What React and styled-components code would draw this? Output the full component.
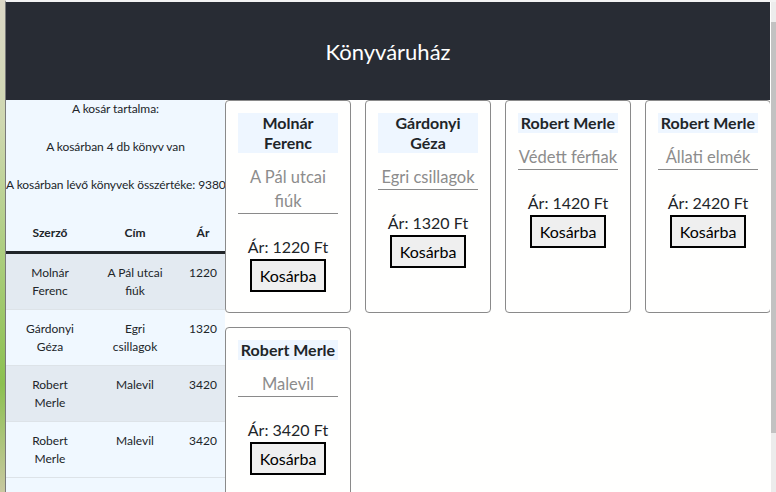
import React from "react";
import styled, { createGlobalStyle } from "styled-components";

const FONT = `"Lato", "Open Sans", sans-serif`;

const books = [
  { author: "Molnár Ferenc", title: "A Pál utcai fiúk", price: 1220 },
  { author: "Gárdonyi Géza", title: "Egri csillagok", price: 1320 },
  { author: "Robert Merle", title: "Védett férfiak", price: 1420 },
  { author: "Robert Merle", title: "Állati elmék", price: 2420 },
  { author: "Robert Merle", title: "Malevil", price: 3420 },
];

// a kosár tartalma
const cart = [books[0], books[1], books[4], books[4]];

function App() {
  const total = cart.reduce((sum, b) => sum + b.price, 0);

  return (
    <Desktop>
      <GlobalStyle />
      <DesktopEdge />
      <Window>
        <Page>
          <Header>Könyváruház</Header>
          <Main>
            <Sidebar>
              <Info>A kosár tartalma:</Info>
              <Info>A kosárban {cart.length} db könyv van</Info>
              <Info>A kosárban lévő könyvek összértéke: {total}</Info>
              <CartTable>
                <HeadRow>
                  <span>Szerző</span>
                  <span>Cím</span>
                  <span>Ár</span>
                </HeadRow>
                {cart.map((b, i) => (
                  <CartRow key={i} $striped={i % 2 === 0}>
                    <span>{b.author}</span>
                    <span>{b.title}</span>
                    <span>{b.price}</span>
                  </CartRow>
                ))}
              </CartTable>
            </Sidebar>
            <Shelf>
              {books.map((b, i) => (
                <Card key={i}>
                  <Author>{b.author}</Author>
                  <Title>{b.title}</Title>
                  <Price>Ár: {b.price} Ft</Price>
                  <BuyButton>Kosárba</BuyButton>
                </Card>
              ))}
            </Shelf>
          </Main>
        </Page>
        <ScrollTrack>
          <ScrollThumb />
        </ScrollTrack>
      </Window>
    </Desktop>
  );
}

const GlobalStyle = createGlobalStyle`
  html, body {
    margin: 0;
    padding: 0;
    overflow: hidden;
  }
  body {
    font-family: ${FONT};
    color: #212529;
  }
`;

const Desktop = styled.div`
  display: flex;
  height: 100vh;
  overflow: hidden;
`;

const DesktopEdge = styled.div`
  width: 5px;
  flex-shrink: 0;
  background: linear-gradient(
    to bottom,
    #dcd8c6 0%,
    #cfd8b0 25%,
    #a8cc78 55%,
    #8cc050 78%,
    #c8c8a0 100%
  );
`;

const Window = styled.div`
  flex: 1;
  display: flex;
  border-left: 1px solid #7a7a7a;
  border-top: 2px solid #f3f3f3;
  background: #fffffe;
  min-width: 0;
`;

const Page = styled.div`
  width: 765px;
  display: flex;
  flex-direction: column;
  overflow: hidden;
`;

const Header = styled.header`
  height: 98px;
  flex-shrink: 0;
  background: #282c34;
  color: #ffffff;
  font-size: 22px;
  display: flex;
  align-items: center;
  justify-content: center;
`;

const Main = styled.div`
  flex: 1;
  display: flex;
  align-items: stretch;
`;

const Sidebar = styled.aside`
  width: 219px;
  flex-shrink: 0;
  background: #f0f8ff;
  font-size: 12px;
  line-height: 18px;
  text-align: center;
`;

const Info = styled.p`
  margin: 0 0 20px;
  white-space: nowrap;
  letter-spacing: -0.08px;
`;

const CartTable = styled.div`
  margin-top: 21px;
`;

const RowGrid = styled.div`
  display: grid;
  grid-template-columns: 64px 58px 30px;
  column-gap: 24px;
  padding: 0 0 0 12px;
  justify-items: center;
  text-align: center;
`;

const HeadRow = styled(RowGrid)`
  font-weight: 700;
  padding-top: 9px;
  padding-bottom: 9px;
  border-bottom: 3px solid #212529;
`;

const CartRow = styled(RowGrid)`
  padding-top: 10px;
  padding-bottom: 9px;
  min-height: 36px;
  background: ${(p) => (p.$striped ? "#e3eaf1" : "transparent")};
  border-bottom: 1px solid #dde3e8;
`;

const Shelf = styled.div`
  display: grid;
  grid-template-columns: repeat(4, 126px);
  gap: 14px;
  align-content: start;
  width: 546px;
`;

const Card = styled.div`
  box-sizing: border-box;
  border: 1px solid #8a8a8a;
  border-radius: 4px;
  background: #fffffe;
  padding: 12px 12px 20px;
  display: flex;
  flex-direction: column;
  align-items: center;
  text-align: center;
  font-size: 16px;
`;

const Author = styled.div`
  width: 100px;
  background: #eef6ff;
  font-weight: 700;
  line-height: 20px;
`;

const Title = styled.div`
  width: 100px;
  margin-top: 12px;
  color: #8c8c8c;
  line-height: 24px;
  font-size: 16.5px;
  border-bottom: 1px solid #8a8a8a;
`;

const Price = styled.div`
  margin-top: 23px;
  line-height: 20px;
`;

const BuyButton = styled.button`
  margin-top: 2px;
  font-family: ${FONT};
  font-size: 16px;
  line-height: 21px;
  color: #000;
  background: #efefef;
  border: 2px solid #000;
  padding: 4px 8px;
  border-radius: 0;
`;

const ScrollTrack = styled.div`
  width: 5px;
  margin-left: 1px;
  background: #ececec;
  display: flex;
  flex-direction: column;
`;

const ScrollThumb = styled.div`
  margin-top: 20px;
  height: 411px;
  background: #c2c2c2;
`;

export default App;
